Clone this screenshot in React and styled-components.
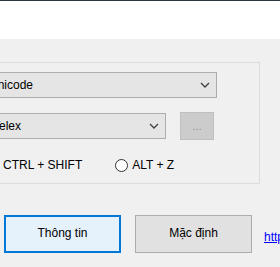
import React from 'react';
import styled, { createGlobalStyle } from 'styled-components';

const GlobalStyle = createGlobalStyle`
  html, body {
    margin: 0;
    padding: 0;
    background: #f0f0f0;
  }
  body {
    font-family: "Liberation Sans", Arial, sans-serif;
    font-size: 12px;
    color: #000;
  }
`;

const Window = styled.div`
  width: 280px;
  height: 267px;
  overflow: hidden;
  background: #f0f0f0;
  display: flex;
  flex-direction: column;
`;

const Header = styled.div`
  height: 38px;
  flex-shrink: 0;
  background: #ffffff;
  border-top: 1px solid #2a383d;
`;

const Body = styled.div`
  display: flex;
  flex-direction: column;
  margin-left: -20px;
  padding-top: 23px;
`;

const GroupBox = styled.div`
  width: 270px;
  border: 1px solid #dcdcdc;
  padding: 9px 0 11px 8px;
  display: flex;
  flex-direction: column;
  gap: 14px;
`;

const Row = styled.div`
  display: flex;
  align-items: center;
  gap: ${(p) => p.$gap || 14}px;
  margin-top: ${(p) => p.$top || 0}px;
  margin-left: ${(p) => p.$shift || 0}px;
`;

const ComboBox = styled.div`
  box-sizing: border-box;
  width: ${(p) => p.$width}px;
  height: 26px;
  background: #e5e5e5;
  border: 1px solid #adadad;
  display: flex;
  align-items: center;
  justify-content: space-between;
  padding: 0 6px 0 3px;
  white-space: nowrap;
`;

const DotsButton = styled.div`
  box-sizing: border-box;
  width: 34px;
  height: 28px;
  background: #cccccc;
  border: 1px solid #bfbfbf;
  color: #8c8c8c;
  display: flex;
  align-items: center;
  justify-content: center;
  font-size: 11px;
`;

const RadioLabel = styled.label`
  display: flex;
  align-items: center;
  gap: 4px;
  white-space: nowrap;
`;

const RadioCircle = styled.span`
  box-sizing: border-box;
  width: 13px;
  height: 13px;
  border-radius: 50%;
  border: 1px solid #333333;
  background: #ffffff;
`;

const ButtonRow = styled.div`
  display: flex;
  align-items: center;
  margin-top: 31px;
  padding-left: 24px;
  gap: 14px;
`;

const Button = styled.div`
  box-sizing: border-box;
  width: 117px;
  height: 38px;
  flex-shrink: 0;
  display: flex;
  align-items: center;
  justify-content: center;
  background: ${(p) => (p.$primary ? '#e5f1fb' : '#e1e1e1')};
  border: ${(p) => (p.$primary ? '2px solid #0078d7' : '1px solid #adadad')};
  padding-bottom: 2px;
`;

const LinkText = styled.a`
  margin-left: -2px;
  margin-top: 6px;
  color: #0000ff;
  text-decoration: underline;
  white-space: nowrap;
`;

function Chevron() {
  return (
    <svg width="10" height="6" viewBox="0 0 10 6">
      <polyline points="1,1 5,5 9,1" fill="none" stroke="#404040" strokeWidth="1.3" />
    </svg>
  );
}

function Radio({ label }) {
  return (
    <RadioLabel>
      <RadioCircle />
      {label}
    </RadioLabel>
  );
}

export default function App() {
  return (
    <Window>
      <GlobalStyle />
      <Header />
      <Body>
        <GroupBox>
          <Row $shift={-4}>
            <ComboBox $width={232}>
              Unicode
              <Chevron />
            </ComboBox>
          </Row>
          <Row $gap={14}>
            <ComboBox $width={177}>
              Telex
              <Chevron />
            </ComboBox>
            <DotsButton>...</DotsButton>
          </Row>
          <Row $gap={33} $top={4} $shift={-3}>
            <Radio label="CTRL + SHIFT" />
            <Radio label="ALT + Z" />
          </Row>
        </GroupBox>
        <ButtonRow>
          <Button $primary>Thông tin</Button>
          <Button>Mặc định</Button>
          <LinkText href="#">https://github.com</LinkText>
        </ButtonRow>
      </Body>
    </Window>
  );
}
